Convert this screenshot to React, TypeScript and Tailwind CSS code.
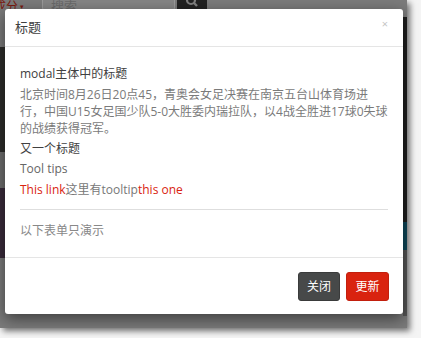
import React from "react";

const font = '"Open Sans","Noto Sans CJK SC",sans-serif';

export default function App() {
  return (
    <div className="w-[421px] h-[338px] bg-[#f4f4f4] overflow-hidden" style={{ fontFamily: font }}>
      <div className="relative w-[407px] h-[328px] bg-[#7b7b7b] shadow-[3px_3px_6px_rgba(0,0,0,0.55)] flex flex-col overflow-hidden">
        {/* backdrop top row */}
        <div className="h-[9px] flex items-end overflow-hidden">
          <div className="w-[40px] h-[20px] flex items-end text-[12px] leading-[12px] text-[#7a1a10] whitespace-nowrap -mb-[4px]">
            <span className="-ml-[6px]">成分</span>
            <span className="ml-[2px] text-[7px]">▾</span>
          </div>
          <div className="ml-[2px] w-[133px] h-[20px] bg-[#858585] border border-[#9a9a9a] rounded-[2px] text-[13px] leading-[13px] text-[#6a6a6a] pl-[8px] flex items-end -mb-[1px]">
            <span className="-mb-[4px]">搜索</span>
          </div>
          <div className="ml-[2px] w-[30px] h-[20px] bg-[#222] flex items-end justify-center">
            <svg width="14" height="14" viewBox="0 0 14 14">
              <circle cx="6" cy="5" r="4" fill="none" stroke="#808080" strokeWidth="2.2" />
              <line x1="9" y1="8" x2="12" y2="11" stroke="#808080" strokeWidth="2.4" />
            </svg>
          </div>
        </div>
        {/* backdrop main */}
        <div className="flex-1 flex">
          <div className="w-[5px] flex flex-col">
            <div className="h-[38px]" />
            <div className="h-[105px] bg-[#2d2d2b]" />
            <div className="h-[36px] bg-[#6e6e6e]" />
            <div className="h-[70px] bg-[#3a2c3c]" />
            <div className="flex-1" />
          </div>
          <div className="flex-1" />
          <div className="w-[4px] flex flex-col">
            <div className="h-[8px]" />
            <div className="h-[205px] bg-[#1e1e1e]" />
            <div className="h-[28px] bg-[#0c4658]" />
            <div className="h-[66px] bg-[#555]" />
            <div className="flex-1" />
          </div>
        </div>

        {/* modal */}
        <div className="absolute left-[5px] top-[9px] w-[398px] h-[305px] bg-white rounded-[3px] shadow-[0_5px_15px_rgba(0,0,0,0.5)] flex flex-col">
          <div className="h-[38px] border-b border-[#e5e5e5] px-[10px] flex items-center justify-between">
            <span className="text-[13px] text-[#404040]">标题</span>
            <span className="text-[11px] leading-none text-[#c4c4c4] mr-[5px] -mt-[8px]">×</span>
          </div>
          <div className="px-[15px] pt-[18px] text-[12px] leading-[18px] text-[#777]">
            <div className="text-[#404040] mb-[3px]">modal主体中的标题</div>
            <div className="leading-[17px] text-[#7a7a7a] whitespace-nowrap">
              <div>北京时间8月26日20点45，青奥会女足决赛在南京五台山体育场进</div>
              <div>行，中国U15女足国少队5-0大胜委内瑞拉队，以4战全胜进17球0失球</div>
              <div>的战绩获得冠军。</div>
            </div>
            <div className="mt-[3px] text-[#404040]">又一个标题</div>
            <div className="mt-[2px] text-[#666]">Tool tips</div>
            <div className="mt-[3px]">
              <span className="text-[#d9230f]">This link</span>
              <span className="text-[#777]">这里有tooltip</span>
              <span className="text-[#d9230f]">this one</span>
            </div>
            <div className="mt-[10px] h-px bg-[#dedede]" />
            <div className="mt-[12px] text-[#888]">以下表单只演示</div>
          </div>
          <div className="mt-auto h-[57px] border-t border-[#e5e5e5] flex justify-end items-start gap-[6px] pt-[14px] pr-[14px]">
            <button className="w-[42px] h-[29px] rounded-[3px] bg-[#474949] border border-[#3a3b3b] text-white text-[12px] flex items-center justify-center">关闭</button>
            <button className="w-[43px] h-[29px] rounded-[3px] bg-[#d9230f] border border-[#c21f0d] text-white text-[12px] flex items-center justify-center">更新</button>
          </div>
        </div>
      </div>
    </div>
  );
}
